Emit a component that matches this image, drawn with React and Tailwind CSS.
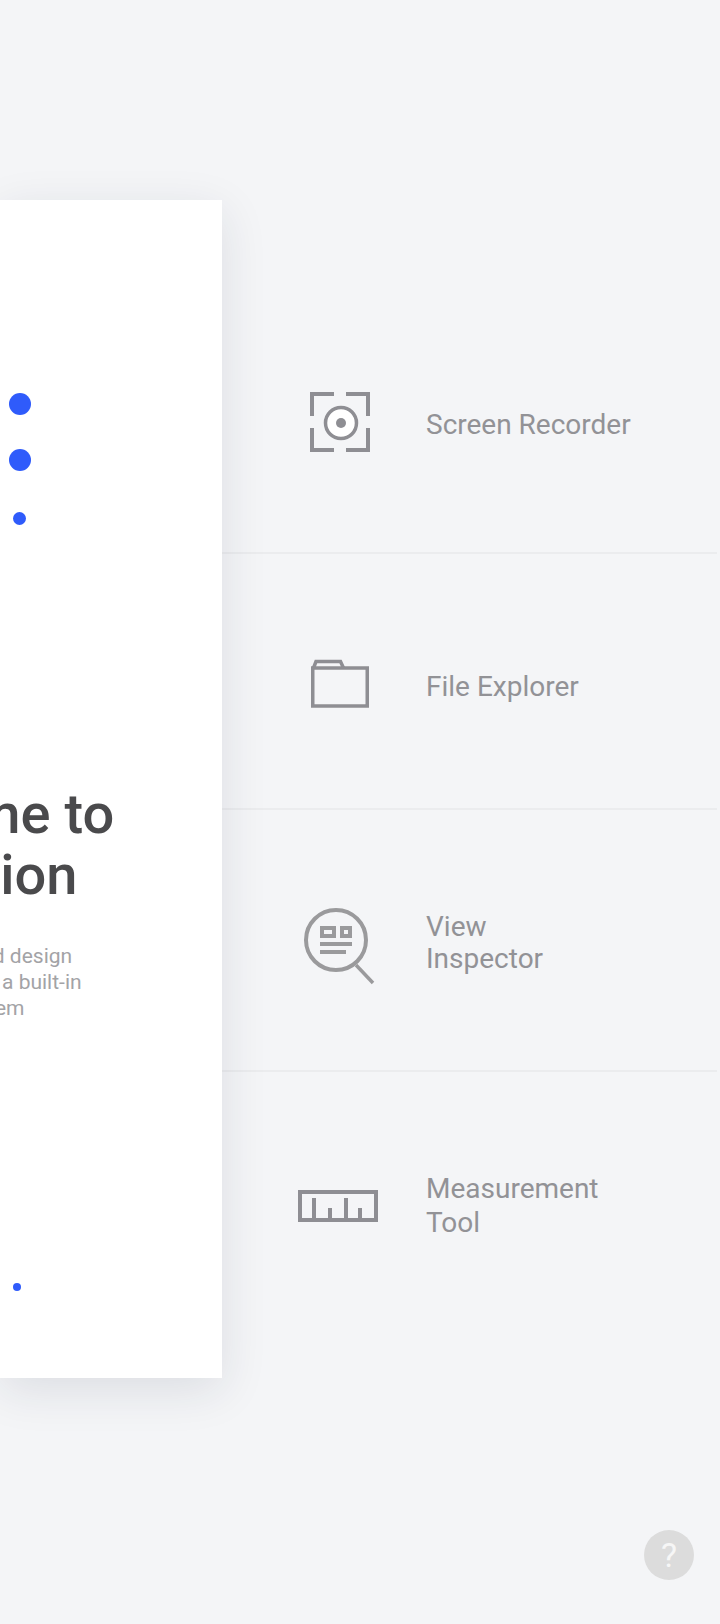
import React from 'react';

const tools = [
  { label: ['Screen Recorder'], icon: RecorderIcon, row: 'h-[256px] border-b-2', text: 'mt-[-2px] leading-[33px]' },
  { label: ['File Explorer'], icon: FolderIcon, row: 'h-[256px] border-b-2', text: 'mt-[10px] leading-[33px]' },
  { label: ['View', 'Inspector'], icon: InspectorIcon, row: 'h-[262px] border-b-2', text: 'mt-[6px] leading-[32px]' },
  { label: ['Measurement', 'Tool'], icon: RulerIcon, row: 'h-[264px]', text: 'mt-[4px] leading-[34px]' },
];

function RecorderIcon() {
  return (
    <svg width="80" height="80" viewBox="0 0 80 80" fill="none" stroke="#8e8e93" strokeWidth="4">
      <path d="M14 31V9H36M48 9H70V31M70 43V65H48M36 65H14V43" />
      <circle cx="43" cy="38" r="15.5" strokeWidth="3.5" fill="#ffffff" />
      <circle cx="43" cy="38" r="5" fill="#8e8e93" stroke="none" />
    </svg>
  );
}

function FolderIcon() {
  return (
    <svg width="80" height="80" viewBox="0 0 80 80" fill="none" stroke="#8e8e93" strokeWidth="3.5">
      <path d="M14.75 27H69.25V65H14.75Z" />
      <path d="M15.5 27L18 20.5H42.5L45.5 27" />
    </svg>
  );
}

function InspectorIcon() {
  return (
    <svg className="overflow-visible" width="80" height="80" viewBox="0 0 80 80" fill="none" stroke="#9a9a9c">
      <circle cx="38" cy="40" r="30" strokeWidth="4" />
      <path d="M58 65L75 83" strokeWidth="3.5" />
      <rect x="24" y="28" width="12" height="8" strokeWidth="4" />
      <rect x="44" y="28" width="8" height="8" strokeWidth="4" />
      <path d="M22 44H54M22 52H48" strokeWidth="4" />
    </svg>
  );
}

function RulerIcon() {
  return (
    <svg width="80" height="80" viewBox="0 0 80 80" fill="none" stroke="#8e8e93" strokeWidth="4">
      <rect x="2" y="28" width="76" height="28" />
      <path d="M16 34V54M32 44V54M48 34V54M62 44V54" />
    </svg>
  );
}

function Dot({ className }) {
  return <div className={`rounded-full bg-[#2f5bfb] ${className}`} />;
}

export default function App() {
  return (
    <div className="relative flex h-[1624px] overflow-hidden bg-[#f4f5f7] font-['Roboto',sans-serif]">
      <div className="relative z-10 mt-[200px] h-[1178px] w-[222px] shrink-0 bg-white shadow-[0_12px_44px_rgba(30,35,60,0.11)]">
        <div className="flex flex-col items-start">
          <Dot className="ml-[9px] mt-[193px] h-[22px] w-[22px]" />
          <Dot className="ml-[9px] mt-[34px] h-[22px] w-[22px]" />
          <Dot className="ml-[13px] mt-[41px] h-[13px] w-[13px]" />
        </div>
        <div className="ml-[-182px] mt-[259px] whitespace-nowrap">
          <h1 className="text-[56px] font-medium leading-[61px] text-[#4a4a4c]">
            <span className="block">Welcome to</span>
            <span className="ml-[-3px] block">Inspection</span>
          </h1>
          <div className="ml-[9px] mt-[37px] text-[21px] leading-[26px] text-[#a3a3a6]">
            <p className="ml-[-4px]">Inspect layouts and design</p>
            <p>of any screen with a built-in</p>
            <p className="ml-[11px]">and a layout system</p>
          </div>
        </div>
        <Dot className="ml-[13px] mt-[262px] h-[8px] w-[8px]" />
      </div>

      <div className="mr-[3px] flex-1 pt-[298px]">
        {tools.map((t) => (
          <div key={t.label[0]} className={`flex items-center border-[#ebecee] pl-[76px] ${t.row}`}>
            <t.icon />
            <div className={`ml-[48px] text-[28px] text-[#929296] ${t.text}`}>
              {t.label.map((line) => (
                <div key={line}>{line}</div>
              ))}
            </div>
          </div>
        ))}
      </div>

      <button className="absolute left-[644px] top-[1530px] flex h-[50px] w-[50px] items-center justify-center rounded-full bg-[#dcdcdc] text-[34px] leading-none text-[#f6f6f6]">
        ?
      </button>
    </div>
  );
}
